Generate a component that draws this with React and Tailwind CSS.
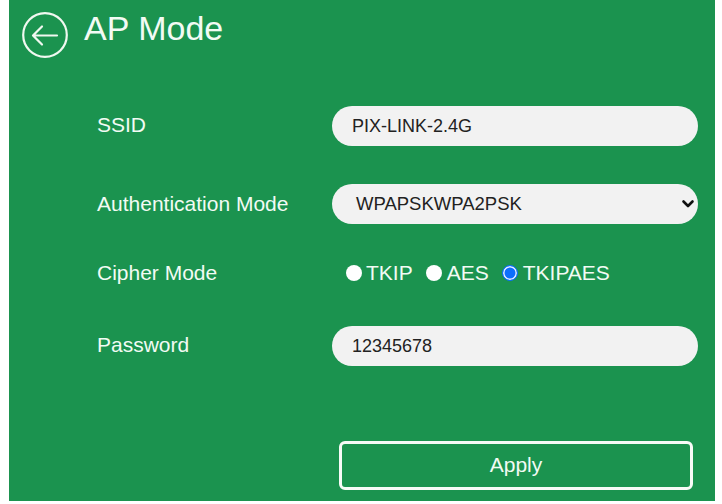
export default function App() {
  return (
    <div className="w-[722px] h-[504px] bg-white overflow-hidden font-['Liberation_Sans',Arial,sans-serif]">
      <div className="ml-[9px] w-[706px] h-[501px] bg-[#1b934f] text-[#f2fbf4] flex flex-col">
        <header className="flex items-start pt-[12px] pl-[13px] h-[106px]">
          <svg width="46" height="46" viewBox="0 0 46 46" fill="none" stroke="#f0f8f0" strokeWidth="2.2" strokeLinecap="round" strokeLinejoin="round">
            <circle cx="23" cy="23" r="21.8" />
            <path d="M35 23.5H11.5M20 14.5l-9 9 9 9" />
          </svg>
          <h1 className="ml-[16px] mt-[-4px] text-[34px] leading-[40px] font-normal">AP Mode</h1>
        </header>

        <div className="flex items-center h-[40px]">
          <label className="w-[323px] pl-[88px] text-[21px] leading-[36px] mb-[2px]">SSID</label>
          <input readOnly value="PIX-LINK-2.4G" className="w-[366px] h-[40px] rounded-[20px] bg-[#f2f2f2] pl-[20px] text-[18px] text-[#222] outline-none" />
        </div>

        <div className="flex items-center h-[40px] mt-[38px]">
          <label className="w-[323px] pl-[88px] text-[21px] leading-[36px]">Authentication Mode</label>
          <div className="relative w-[366px] h-[40px] rounded-[20px] bg-[#f2f2f2] pl-[24px] flex items-center text-[18.5px] text-[#222]">
            <span>WPAPSKWPA2PSK</span>
            <svg className="absolute right-[3px] top-[14px]" width="14" height="12" viewBox="0 0 14 12" fill="none" stroke="#111" strokeWidth="2.6" strokeLinecap="round" strokeLinejoin="round">
              <path d="M2.5 3.5 7 8l4.5-4.5" />
            </svg>
          </div>
        </div>

        <div className="flex items-center h-[40px] mt-[29px]">
          <label className="w-[323px] pl-[88px] text-[21px] leading-[36px]">Cipher Mode</label>
          <div className="flex items-center text-[21px] pl-[14px]">
            <span className="w-[16px] h-[16px] rounded-full bg-white" />
            <span className="ml-[4px]">TKIP</span>
            <span className="ml-[13px] w-[16px] h-[16px] rounded-full bg-white" />
            <span className="ml-[5px]">AES</span>
            <span className="ml-[13px] w-[16px] h-[16px] rounded-full bg-[#0d6efd] border-[1.5px] border-[#0d6efd] shadow-[inset_0_0_0_1.5px_#e8f0ff]" />
            <span className="ml-[5px]">TKIPAES</span>
          </div>
        </div>

        <div className="flex items-center h-[40px] mt-[33px]">
          <label className="w-[323px] pl-[88px] text-[21px] leading-[36px] mb-[2px]">Password</label>
          <input readOnly value="12345678" className="w-[366px] h-[40px] rounded-[20px] bg-[#f2f2f2] pl-[20px] text-[18px] text-[#222] outline-none" />
        </div>

        <div className="mt-[75px] pl-[330px]">
          <button className="w-[354px] h-[49px] rounded-[6px] border-[3px] border-[#f7fbf7] pb-[2px] text-[21px] text-[#f2fbf4]">Apply</button>
        </div>
      </div>
    </div>
  );
}
